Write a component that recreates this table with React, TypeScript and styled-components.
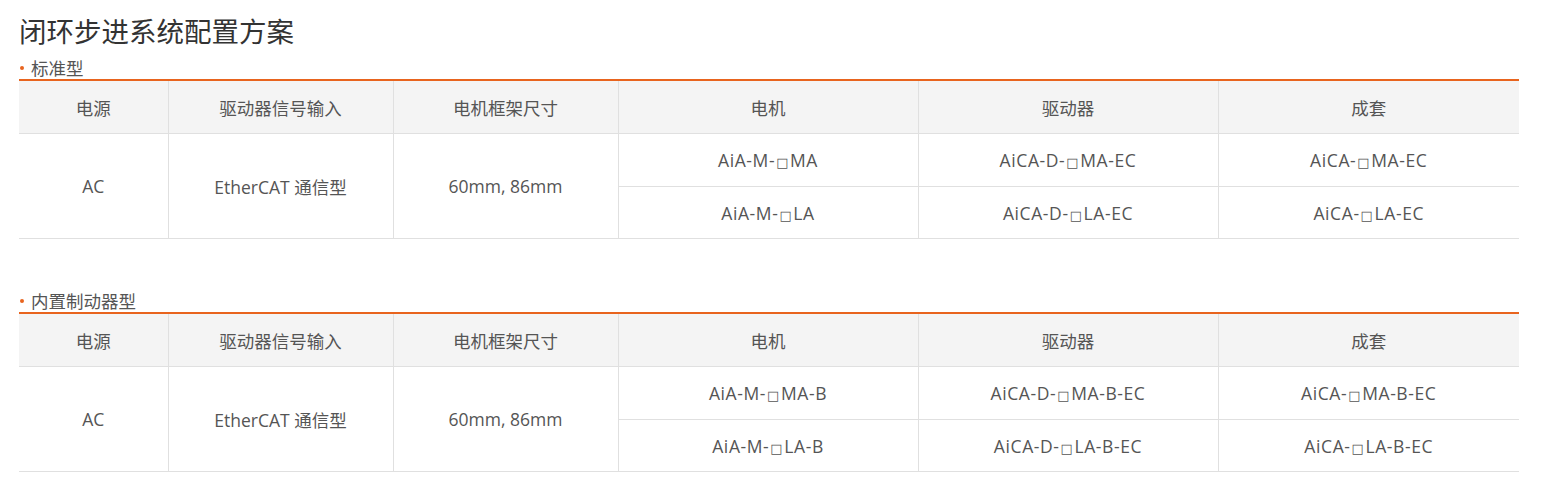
import React from "react";
import styled, { createGlobalStyle } from "styled-components";

const Global = createGlobalStyle`
  html, body { margin: 0; padding: 0; background: #fff; }
  body { font-family: "Open Sans", "Noto Sans CJK SC", sans-serif; color: #555; }
`;

const Page = styled.div`
  padding: 13px 25px 0 19px;
`;

const Title = styled.h1`
  margin: 0 0 10px;
  font-size: 27.5px;
  line-height: 34px;
  font-weight: 400;
  color: #333;
  font-family: "Noto Sans CJK SC", sans-serif;
`;

const Section = styled.section<{ $gap: number }>`
  margin-top: ${(p) => p.$gap}px;
`;

const Label = styled.div`
  display: flex;
  align-items: center;
  gap: 7px;
  height: 22px;
  font-size: 17.5px;
  line-height: 22px;
  color: #555;
  font-family: "Noto Sans CJK SC", sans-serif;
  padding-left: 1px;
`;

const Dot = styled.span`
  width: 4px;
  height: 4px;
  border-radius: 50%;
  background: #e8641e;
`;

const Table = styled.table`
  width: 1500px;
  border-collapse: collapse;
  table-layout: fixed;
  border-top: 2px solid #e8641e;
  color: #555;
`;

const Col = styled.col<{ $w: number }>`
  width: ${(p) => p.$w}px;
`;

const Th = styled.th`
  height: 52px;
  padding: 0;
  background: #f4f4f4;
  font-weight: 400;
  font-size: 17.5px;
  text-align: center;
  border-bottom: 1px solid #e0e0e0;
  border-right: 1px solid #e0e0e0;
  font-family: "Noto Sans CJK SC", sans-serif;
  &:last-child { border-right: none; }
`;

const Td = styled.td<{ $model?: boolean; $h: number }>`
  height: ${(p) => p.$h}px;
  padding: 0;
  text-align: center;
  font-size: 17.5px;
  letter-spacing: ${(p) => (p.$model ? "0.6px" : "0")};
  border-bottom: 1px solid #e0e0e0;
  border-right: 1px solid #e0e0e0;
  font-family: "Open Sans", "Noto Sans CJK SC", sans-serif;
  &:last-child { border-right: none; }
`;

const Box = styled.span`
  font-size: 13px;
  font-family: "DejaVu Sans", sans-serif;
  margin: 0 1px;
`;

const headers = ["电源", "驱动器信号输入", "电机框架尺寸", "电机", "驱动器", "成套"];
const widths = [149, 225, 225, 300, 300, 301];
const rowHeights = [52, 51];

type Row = [string, string, string];

const Model = ({ text }: { text: string }) => {
  const [a, b] = text.split("□");
  return (
    <>
      {a}
      <Box>□</Box>
      {b}
    </>
  );
};

const ConfigTable = ({ rows }: { rows: Row[] }) => (
  <Table>
    <colgroup>
      {widths.map((w, i) => (
        <Col key={i} $w={w} />
      ))}
    </colgroup>
    <thead>
      <tr>
        {headers.map((h) => (
          <Th key={h}>{h}</Th>
        ))}
      </tr>
    </thead>
    <tbody>
      {rows.map((r, i) => (
        <tr key={i}>
          {i === 0 && (
            <>
              <Td $h={rowHeights[0]} rowSpan={rows.length}>AC</Td>
              <Td $h={rowHeights[0]} rowSpan={rows.length}>EtherCAT 通信型</Td>
              <Td $h={rowHeights[0]} rowSpan={rows.length}>60mm, 86mm</Td>
            </>
          )}
          {r.map((c, j) => (
            <Td key={j} $h={rowHeights[i]} $model>
              <Model text={c} />
            </Td>
          ))}
        </tr>
      ))}
    </tbody>
  </Table>
);

export default function App() {
  return (
    <>
      <Global />
      <Page>
        <Title>闭环步进系统配置方案</Title>
        <Section $gap={0}>
          <Label>
            <Dot />
            标准型
          </Label>
          <ConfigTable
            rows={[
              ["AiA-M-□MA", "AiCA-D-□MA-EC", "AiCA-□MA-EC"],
              ["AiA-M-□LA", "AiCA-D-□LA-EC", "AiCA-□LA-EC"],
            ]}
          />
        </Section>
        <Section $gap={51}>
          <Label>
            <Dot />
            内置制动器型
          </Label>
          <ConfigTable
            rows={[
              ["AiA-M-□MA-B", "AiCA-D-□MA-B-EC", "AiCA-□MA-B-EC"],
              ["AiA-M-□LA-B", "AiCA-D-□LA-B-EC", "AiCA-□LA-B-EC"],
            ]}
          />
        </Section>
      </Page>
    </>
  );
}
